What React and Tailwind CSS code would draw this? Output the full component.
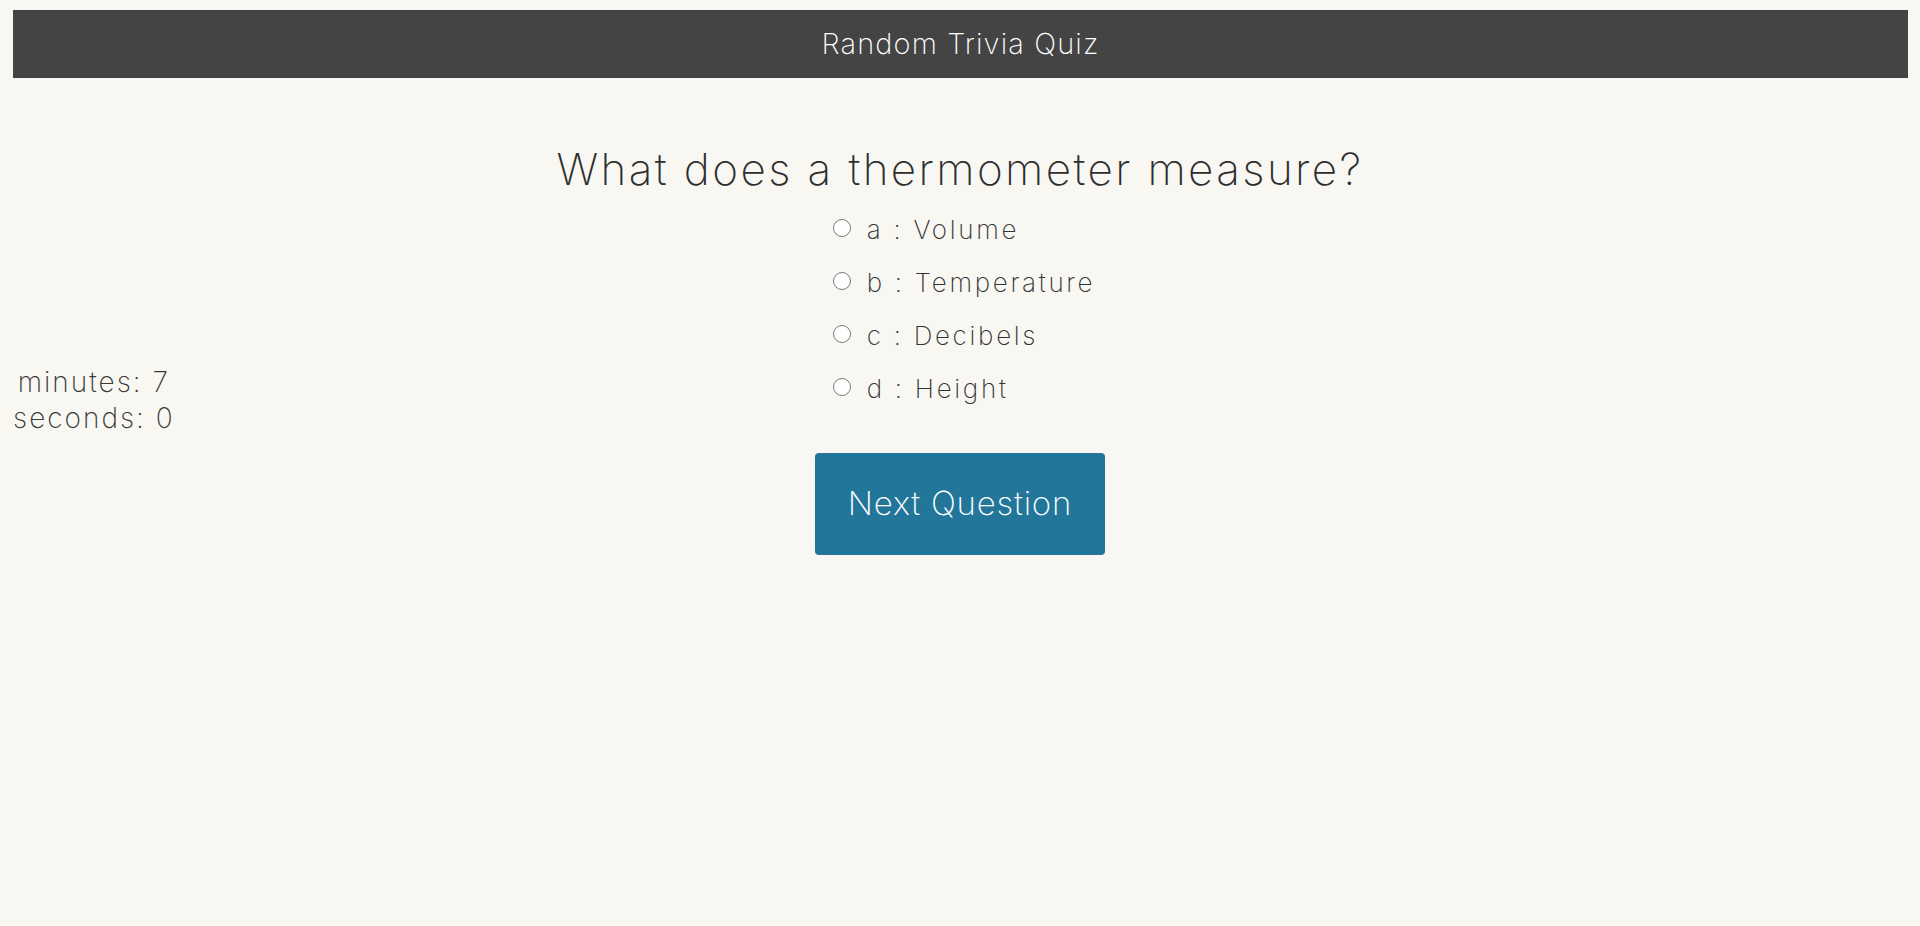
import { useState } from "react";

const options = [
  { key: "a", label: "Volume" },
  { key: "b", label: "Temperature" },
  { key: "c", label: "Decibels" },
  { key: "d", label: "Height" },
];

export default function App() {
  const [picked, setPicked] = useState("");

  return (
    <div className="min-h-[926px] bg-[#f8f7f2] font-['Inter',sans-serif] font-extralight text-[#333] overflow-hidden">
      <header className="mt-[10px] ml-[13px] mr-[12px] h-[68px] bg-[#444444] flex items-center justify-center">
        <h2 className="text-[29px] tracking-[1.1px] font-extralight text-white">Random Trivia Quiz</h2>
      </header>

      <div className="mt-[61px] grid grid-cols-[1fr_auto_1fr]">
        <div className="mt-[225px] ml-[13px] w-max whitespace-nowrap text-center text-[28px] tracking-[2px] leading-[36px] text-[#3a3a3a]">
          <div>minutes: 7</div>
          <div>seconds: 0</div>
        </div>

        <div className="flex flex-col items-center">
          <h1 className="text-[44px] tracking-[2.4px] leading-[60px] font-extralight text-[#2e2e2e]">
            What does a thermometer measure?
          </h1>
          <ul className="mt-[4px] self-center ml-[8px]">
            {options.map((o) => (
              <li key={o.key} className="h-[53px] flex items-center">
                <label className="flex items-center cursor-pointer text-[26px] tracking-[2.7px] leading-[53px] text-[#333]">
                  <input
                    type="radio"
                    name="answer"
                    value={o.key}
                    checked={picked === o.key}
                    onChange={() => setPicked(o.key)}
                    className="appearance-none w-[18px] h-[18px] m-0 mt-[-3px] mr-[16px] rounded-full border-[1.5px] border-[#7a7a7a] bg-white checked:border-[5px] checked:border-[#22769a]"
                  />
                  {o.key} : {o.label}
                </label>
              </li>
            ))}
          </ul>
          <button className="mt-[38px] w-[290px] h-[102px] rounded-[4px] bg-[#22769a] text-white text-[33px] tracking-[0.8px] font-extralight">
            Next Question
          </button>
        </div>

        <div />
      </div>
    </div>
  );
}
